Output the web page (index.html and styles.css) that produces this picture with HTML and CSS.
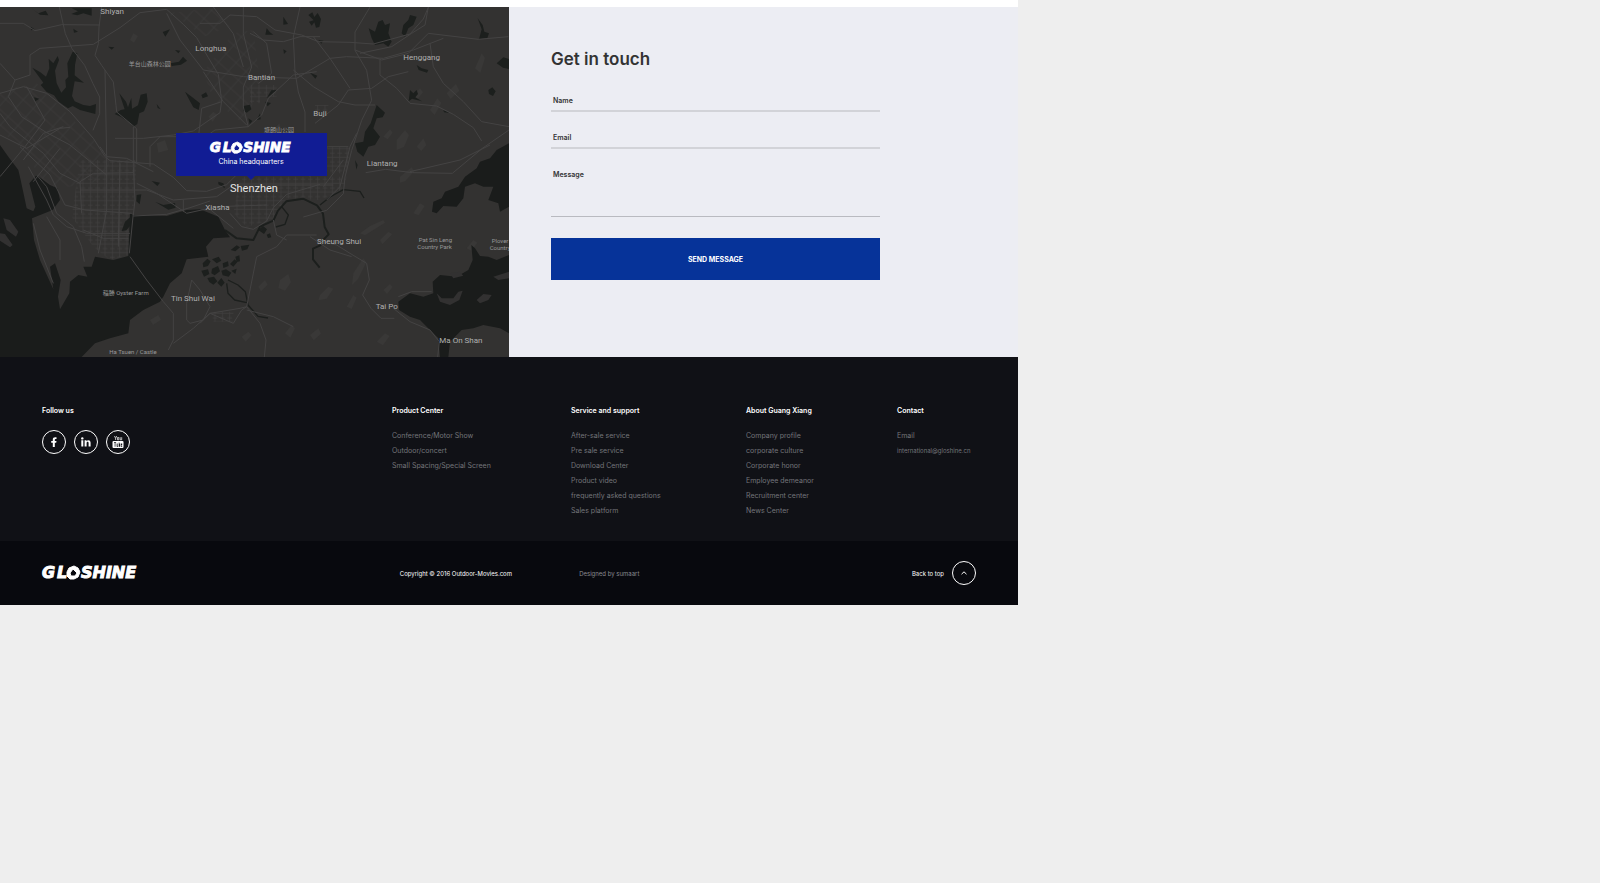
FILE: index.html
```html
<!DOCTYPE html>
<html lang="en">
<head>
    <meta charset="UTF-8">
    <meta name="viewport" content="width=device-width, initial-scale=1.0">
    <title>Gloshine - Contact</title>
    <link rel="stylesheet" href="styles.css">
</head>
<body>
<div class="page">
    <main class="contact">
        <div class="map">
            <svg class="map-art" viewBox="0 21 1527 1050" role="img" aria-label="Map of Shenzhen">
                <defs>
                    <pattern id="streets" width="22" height="26" patternUnits="userSpaceOnUse">
                        <path d="M0 4H22M7 0V26M0 18H14" fill="none" stroke="#403f3f" stroke-width="2"/>
                    </pattern>
                    <pattern id="diagonal" width="40" height="34" patternUnits="userSpaceOnUse" patternTransform="rotate(42)">
                        <path d="M0 6H40M12 0V34" fill="none" stroke="#3c3b3b" stroke-width="2"/>
                    </pattern>
                </defs>
                <rect y="21" width="1527" height="1050" fill="#333231"/>

                <!-- hills -->
                <g fill="#393837">
                    <path d="M840 840l25-18 8 25-18 25-20-8zM775 860l20-20 8 14-20 20zM960 885l25-25 15 6-20 30-25 5zM1060 820l30-45 9 12-25 50-18 18zM1240 640l20-30 14 8-18 28zM1140 720l25-25 12 8-30 30zM1200 530l35-28 8 12-28 30-15 4z"/>
                    <path d="M1190 420l25-30 12 16-15 35-22 9zM1290 330l22-35 12 14-20 36zM1340 280l28-28 10 20-26 25zM1425 205l20-45 10 14-14 45zM1240 285l20-20 9 12-18 22zM1250 440l20-25 9 20-15 18zM1150 410l20-22 8 10-15 20z"/>
                    <path d="M625 350l15-15 12 10-14 20zM820 390l18-20 6 18-15 12zM490 195l16-15 9 12-16 16zM390 120l10-20 14 8-12 20zM1040 920l20-35 10 8-15 34zM930 1005l25-20 8 16-22 20zM1130 1025l25-25 14 8-20 28zM1400 745l20-25 12 8-18 24zM470 430l25-10 10 30-30 8z"/>
                    <path d="M725 1010l20-15 10 10-18 20zM855 1000l20-25 10 10-14 28zM450 960l25-15 8 14-24 16zM1150 870l20-18 8 9-17 21zM1080 700l30-22 40-18 5 8-60 38z"/>
                </g>

                <!-- dense districts -->
                <path d="M0 270L110 250 330 470 320 540 150 570 60 440 0 390z" fill="url(#diagonal)"/>
                <path d="M240 480H410L400 640 385 765 330 780 280 740 215 650z" fill="url(#streets)"/>
                <path d="M720 530H1040L1030 570 960 600 860 595 820 660 740 680 700 640z" fill="url(#streets)"/>
                <path d="M700 100L760 90 780 250 735 375 640 300 610 215z" fill="url(#diagonal)"/>
                <path d="M500 40L640 25 690 80 610 110 560 70z" fill="url(#diagonal)"/>
                <path d="M750 255H830V290H780V310H750zM630 935H700V965H640zM945 315H985V335H945zM980 440H1050L1040 520H980z" fill="url(#streets)"/>

                <!-- sea -->
                <g fill="#1a1c1b">
                    <path d="M0 435L25 470 55 510 62 540 80 625 100 634 106 620 88 550 110 525 150 555 172 565 180 600 158 630 96 655 102 720 120 780 160 868 150 800 165 790 182 840 174 890 180 928 208 880 210 845 235 825 262 830 250 800 275 800 285 770 340 780 385 768 390 640 400 645 500 648 560 630 600 628 655 650 675 690 690 712 640 715 618 740 625 770 560 778 545 820 510 850 490 890 480 905 430 930 390 960 385 1000 330 1015 285 1030 245 1071H0z"/>
                    <path d="M1527 430L1490 450 1470 475 1440 485 1430 505 1395 530 1375 560 1335 575 1325 595 1300 605 1296 635 1310 640 1330 618 1370 620 1390 595 1395 560 1425 550 1450 560 1480 560 1465 600 1495 610 1500 635 1527 620z"/>
                    <path d="M1527 765L1490 780 1465 770 1440 768 1425 745 1414 735 1418 780 1405 810 1370 830 1320 825 1298 845 1300 880 1270 890 1230 880 1195 905 1197 930 1230 950 1260 960 1290 990 1315 1015 1320 1071H1345L1350 1025 1385 990 1420 985 1450 975 1500 985 1527 1000z"/>
                </g>
                <g fill="#323131">
                    <path d="M10 655L30 660 55 695 48 710 20 690zM0 700L15 702 38 735 30 742 0 722z"/>
                    <path d="M1310 880L1325 895 1360 895 1375 875 1388 872 1378 900 1350 915 1320 905zM1430 900L1450 882 1475 885 1465 900 1440 910zM1480 830L1527 815V835L1495 840zM1350 820l28-5 12 12-30 8z"/>
                </g>

                <!-- reservoirs and ponds -->
                <g fill="#1c1f1d">
                    <path d="M97 203L120 216 138 230 148 205 146 176 160 190 173 168 177 180 165 212 170 250 184 278 198 262 196 240 205 230 202 190 218 155 232 160 225 195 224 226 252 248 224 244 216 288 224 304 250 315 270 318 288 312 286 342 240 330 218 318 204 325 176 305 162 286 140 276 122 255 130 248z"/>
                    <path d="M358 280L378 305 384 322 394 294 396 326 414 316 422 284 440 280 443 305 432 334 418 340 412 372 400 380 390 368 362 350 344 342 362 330 374 328z"/>
                    <path d="M555 275L575 290 600 310 596 330 580 322 568 300zM512 190l25-5 12-15 12 12-18 12-28 4zM488 96l22-8-14 22zM325 140l18 2-8 7zM604 285l14-8 6 12-16 6zM525 150l16 2-6 8zM470 312l12 16-9-4z"/>
                    <path d="M95 25l20 15 22-8 8 14-25-2zM215 25h60v22l-25-7-18 6-18-4 20-8zM92 80l12 8-10 3zM220 86l14 9-12 3zM102 292l16 4-12 8z"/>
                    <path d="M1106 85L1125 95 1135 65 1148 60 1155 75 1170 70 1165 100 1175 125 1165 140 1150 130 1125 135 1115 115zM1205 100L1210 75 1225 60 1230 45 1250 50 1240 75 1225 85 1215 110zM1433 55l15 20 5 20 14 5-5 14-25 4 8-30zM925 45l12-8 6 14 10-12 10 18-5 24-10 2-5-16-8 10-8-12 14-4zM850 50l14 22-14 2zM800 85l10 12 10 7-24 0z"/>
                    <path d="M1130 315L1155 338 1148 352 1130 355 1120 385 1140 410 1125 435 1105 440 1090 470 1072 455 1065 430 1090 425 1095 395 1112 370zM1230 270l10 10 10-10 4 12-8 10 20 12-30-8-10 8zM1490 190l20-18 17 5v30l-18-4zM1465 270l12-8 10 12-8 14-12-6zM930 218l22 9-6 9zM1250 195l15 10 20 5-4 8-25-8zM1065 480l8 15-4 14zM1330 330l20 9-18-2z"/>
                    <path d="M730 318l20-4 4 14-14 10-10-6zM795 305l18 4-10 10zM850 148l10 6-8 8zM955 120l15 2-6 9zM830 270l-30 25 14-24zM745 355l12 8-8 10zM780 340l-10 20 12-2z"/>
                    <path d="M455 543l25 5-8 10zM465 605l25 10 35-6 2 14-22 6zM655 545l15 5 5 15-20-12zM375 665l20-18-4 30-12 14-14 2zM410 585l14-2-5 30-10-9z"/>
                    <path d="M608 790l14-14 10 8-8 14-14 4zM636 778l20-8 8 12-14 8zM668 790l16-6 2 14-16 6zM604 812l20-4 4 14-16 8zM636 806l18-8 6 16-16 12-10-6zM622 834l20-4 10 14-12 10-12-8zM664 812l14-4 16 10-8 12-18-4zM652 848l12-14 10 14-10 12z"/>
                    <path d="M692 750l18-14 10 6-14 12zM722 738l26-4-6 14-16 4zM690 792l14-14 8 8-12 14zM706 770l12-4 2 18-10 2zM694 812l16-6-4 16zM775 690l14-12 12 10-9 14zM800 704l10-4 4 12-10 2z"/>
                </g>
                <g fill="none" stroke="#1c1f1d" stroke-width="6" stroke-linejoin="round">
                    <path d="M675 690l35 25 50 5 20-40 40-18 14-30 25-28 50-8 42 20 18 25 5 40 12 22-15 15-10 18-22 10 0 32 20 25" />
                    <path d="M960 615l30-24 40-22 50 5 12 20M684 840l30 15 22 20 8 40 30 34 30 5M680 850l4 30 20 20 36 8M845 620l20 25-10 28-28 8" stroke-width="4"/>
                </g>

                <!-- roads -->
                <g class="roads">
                    <path d="M178 21l18 80 20 45 38 50 25 55 20 40 0 50-20 50M305 21l-8 60-2 50-10 35 20 30 35 50 8 70 2 20 60 50 0 100"/>
                    <path d="M0 70h70l35 22 80-18 115 1M0 190l45 50 45-15 0-60 30-20 160-12 80-50 60-45 80-10 50 45 40 40 35 60 30 50 10 80-5 35-80 55-60 12-90 10-85 0"/>
                    <path d="M0 280l70-20 70 20 70 55 70 80 35 55 15 12 130 10 60 40 40 40 60 2 60-20 40-40 80-70"/>
                    <path d="M45 240l-20 50 40 60 70 45 75 40 110 90M0 340l30 40 100 80 50 60 60 30M80 260l55 100-60 80-75 90M0 405l80 40 100-60 30-3"/>
                    <path d="M70 480l60-80 60-20M100 545l80-100M60 440l90 85 45 90 60 15 140 10M85 500l55 100 20 45 40 35 60 20 130 0"/>
                    <path d="M110 525l30 35 30 80 50 40 25 60 8 45M140 650l40 70 0 60M245 640l-5-95 40-25 120-2M300 440l20 30 0 160-25 130M315 210l5 260 60 5 80 40M360 490l-5 250M400 380v120l5 100-5 45"/>
                    <path d="M100 670l20 80 40 100M240 570l200 0 80 30 130-10 50-35 300 0M250 690l60 25 75 0M410 550l60 30 90 60 90-20 150-5"/>
                    <path d="M500 40l40 80 70 90 120 20 160 5 100-60 50-5 110 5 90-25 90-35"/>
                    <path d="M600 70l60 0 30-25 80 5 55 40 80 15 50 20 95 2 70 5 110-30 40-45 15-35M730 21l0 80 25 100-25 60 0 60 15 60"/>
                    <path d="M750 100l40 20 60 5 50-15 60 0M610 215l60 90 40 40 30 30M560 500l15-60 70-50 100-10 40-35 20-50 75-70 70-10"/>
                    <path d="M760 95l40 35 15 90-40 30M900 21l-20 90 5 105 10 60 20 60 0 60"/>
                    <path d="M880 210l60 50 75 45 50 10 60 0M945 370l70-55 30-45 70-5 50-35 60-15M940 110l50 65 60 90M1110 21l-45 75 0 55 35 60 15 90-30 60-30 90-20 80-5 50-50 50-70 20"/>
                    <path d="M1140 180l0 45 50 40 40 45 80 8 50 25 60 40 25 40M1065 150l80 30 80-20 60-60 150 18 90-8M1290 130l10 70 30 50 60 55 55 60 82 15"/>
                    <path d="M1527 390l-80 55-90 75-120-2-80-10-60 10M1230 515l150-35 90-45M1080 160l95-20 60-40 40-25 10-54"/>
                    <path d="M390 770l50 70 50 65 30 35 0 80-15 30M400 640l-12 120M520 1030l60-45 50-45 90-15 20-5 30-150 60-30 30-35 90 0"/>
                    <path d="M820 660l10 45 30 15M740 920l40 50 18 50-5 51M740 930l80 20 60 30M600 970l30-30 70 30 25-40 15-10M560 960l0-50 15-70 25 30 30 50-20 40-40 10z"/>
                    <path d="M950 720l60 15 40 25 50 30 8 50-20 45 25 40 30 30 40 0M1180 925l50 40 60 25 28 35-5 46M1195 890l40-15 60 0M930 710l60 40 65 20"/>
                    <path d="M400 648l100-5 70-20 60-20M690 640l35 40 35 8 40-25 20-40 40-40 100-30M550 600v35M620 620l80 65"/>
                    <path d="M980 600l40-40 30-120 20-40M985 440h60M970 560l60-80M930 530l20-80 35-10M450 500l0-60 30-30 110 0M640 21l60 80 30 100M665 305l-60 20-10 90"/>
                </g>

                <g class="places">
                    <text x="301" y="42">Shiyan</text>
                    <text x="586" y="154">Longhua</text>
                    <text x="744" y="240">Bantian</text>
                    <text x="1210" y="180">Henggang</text>
                    <text x="940" y="348">Buji</text>
                    <text x="1100" y="498">Liantang</text>
                    <text x="616" y="630">Xiasha</text>
                    <text x="951" y="733">Sheung Shui</text>
                    <text x="513" y="903">Tin Shui Wai</text>
                    <text x="1127" y="926">Tai Po</text>
                    <text x="1318" y="1029">Ma On Shan</text>
                </g>
                <g class="parks">
                    <text x="386" y="197">羊台山森林公园</text>
                    <text x="792" y="396">塘朗山公园</text>
                    <text x="308" y="884">稲勝 Oyster Farm</text>
                    <text x="1256" y="726">Pat Sin Leng</text>
                    <text x="1252" y="747">Country Park</text>
                    <text x="1475" y="729">Plover</text>
                    <text x="1469" y="750">Country</text>
                    <text x="328" y="1062">Ha Tsuen / Castle</text>
                </g>
                <text class="city" x="690" y="576">Shenzhen</text>
            </svg>

            <div class="callout">
                <svg class="logo logo-small" viewBox="0 0 96 14" role="img" aria-label="Gloshine">
                    <text x="0" y="12">G</text>
                    <text x="15" y="12">L</text>
                    <path fill-rule="evenodd" d="M32 0L36 2L38 6L36 11L32 13H28L25 10V6L27 2zM31 3L28 7L29 10H33L35 7z"/>
                    <text x="39" y="12">SHINE</text>
                </svg>
                <span class="callout-text">China headquarters</span>
            </div>
        </div>

        <form class="touch">
            <h2 class="touch-title">Get in touch</h2>
            <div class="field">
                <label for="name">Name</label>
                <input type="text" id="name">
            </div>
            <div class="field">
                <label for="email">Email</label>
                <input type="email" id="email">
            </div>
            <div class="field field-message">
                <label for="message">Message</label>
                <textarea id="message"></textarea>
            </div>
            <button type="button" class="send">SEND MESSAGE</button>
        </form>
    </main>

    <footer>
        <div class="footer-links">
            <div class="column">
                <h3>Follow us</h3>
                <div class="social">
                    <a href="#" class="circle" aria-label="Facebook">
                        <svg viewBox="0 0 12 12"><path d="M4.8 11V6.7H3.2V4.9H4.8V3.6C4.8 2 5.7 1.2 7.2 1.2H8.5V3H7.6C7 3 6.8 3.3 6.8 3.8V4.9H8.5L8.2 6.7H6.8V11z"/></svg>
                    </a>
                    <a href="#" class="circle" aria-label="LinkedIn">
                        <svg viewBox="0 0 12 12"><circle cx="2.3" cy="2.4" r="1.2"/><path d="M1.3 4.3H3.3V10.4H1.3zM4.6 4.3H6.5V5.2C7.6 3.5 10.6 3.8 10.6 6.7V10.4H8.6V7.2C8.6 5.3 6.6 5.4 6.6 7.2V10.4H4.6z"/></svg>
                    </a>
                    <a href="#" class="circle" aria-label="YouTube">
                        <svg class="youtube" viewBox="0 0 12 14"><path d="M2.5 1L3.6 3.4V5M4.7 1L3.6 3.4M5.5 2.5H6.8V4.8H5.5zM8.2 2.2V4.8H9.7V2.2" fill="none" stroke="#fff" stroke-width="0.7"/><path fill-rule="evenodd" d="M1.5 6H10.5Q11.5 6 11.5 7V12Q11.5 13 10.5 13H1.5Q0.5 13 0.5 12V7Q0.5 6 1.5 6zM2 7.3V8.1H2.7V11.7H3.4V8.1H4.1V7.3zM4.7 8.5V11.7H6.1V8.5H5.6V11H5.2V8.5zM6.8 7.3V11.7H8.1V8.5H7.3V7.3zM8.8 8.5V11.7H10.2V11H9.4V10.3H10.2V8.5z"/></svg>
                    </a>
                </div>
            </div>
            <div class="column">
                <h3>Product Center</h3>
                <ul>
                    <li><a href="#">Conference/Motor Show</a></li>
                    <li><a href="#">Outdoor/concert</a></li>
                    <li><a href="#">Small Spacing/Special Screen</a></li>
                </ul>
            </div>
            <div class="column">
                <h3>Service and support</h3>
                <ul>
                    <li><a href="#">After-sale service</a></li>
                    <li><a href="#">Pre sale service</a></li>
                    <li><a href="#">Download Center</a></li>
                    <li><a href="#">Product video</a></li>
                    <li><a href="#">frequently asked questions</a></li>
                    <li><a href="#">Sales platform</a></li>
                </ul>
            </div>
            <div class="column">
                <h3>About Guang Xiang</h3>
                <ul>
                    <li><a href="#">Company profile</a></li>
                    <li><a href="#">corporate culture</a></li>
                    <li><a href="#">Corporate honor</a></li>
                    <li><a href="#">Employee demeanor</a></li>
                    <li><a href="#">Recruitment center</a></li>
                    <li><a href="#">News Center</a></li>
                </ul>
            </div>
            <div class="column">
                <h3>Contact</h3>
                <ul>
                    <li>Email</li>
                    <li><a class="mail" href="mailto:international@gloshine.cn">international@gloshine.cn</a></li>
                </ul>
            </div>
        </div>

        <div class="footer-bar">
            <svg class="logo" viewBox="0 0 96 14" role="img" aria-label="Gloshine">
                <text x="0" y="12">G</text>
                <text x="15" y="12">L</text>
                <path fill-rule="evenodd" d="M32 0L36 2L38 6L36 11L32 13H28L25 10V6L27 2zM31 3L28 7L29 10H33L35 7z"/>
                <text x="39" y="12">SHINE</text>
            </svg>
            <span class="copyright">Copyright © 2016 Outdoor-Movies.com</span>
            <span class="designed">Designed by sumaart</span>
            <a href="#" class="top-link">
                Back to top
                <span class="circle">
                    <svg viewBox="0 0 12 12"><path d="M3.5 7.2L6 4.8L8.5 7.2" fill="none" stroke="#fff" stroke-width="1"/></svg>
                </span>
            </a>
        </div>
    </footer>
</div>
</body>
</html>
```
FILE: styles.css
```css
* {
    box-sizing: border-box;
}
body {
    margin: 0;
    background-color: #eeeeee;
    font-family: Inter, "Liberation Sans", sans-serif;
    font-size: 7px;
    line-height: 15px;
    color: #333;
}
a {
    color: inherit;
    text-decoration: none;
}
.page {
    max-width: 1018px;
    padding-top: 7px;
    background: white;
}

/* contact */
.contact {
    display: grid;
    grid-template-columns: 1fr 1fr;
    background: #ecedf3;
}
.map {
    position: relative;
}
.map-art {
    display: block;
    width: 100%;
}
.roads {
    fill: none;
    stroke: #444343;
    stroke-width: 3px;
    stroke-linejoin: round;
}
.places, .parks, .city {
    font-family: Roboto, "Noto Sans CJK SC", sans-serif;
    font-size: 24px;
    fill: #b0b0b0;
}
.parks {
    font-size: 18px;
    fill: #999;
}
.city {
    font-size: 33px;
    fill: #e4e4e4;
}
.callout {
    position: absolute;
    top: 36%;
    left: 50%;
    width: 151px;
    height: 43px;
    margin-left: -79px;
    padding-top: 9px;
    display: flex;
    flex-direction: column;
    align-items: center;
    background: #111c94;
    color: white;
}
.callout::after {
    content: "";
    position: absolute;
    top: 100%;
    border: 4px solid transparent;
    border-top-color: #111c94;
}
.logo {
    display: block;
    width: 96px;
    height: 14px;
    overflow: visible;
    fill: white;
    stroke: white;
    stroke-width: 1px;
    font-family: "DejaVu Sans", sans-serif;
    font-size: 16px;
    font-weight: bold;
    font-style: italic;
}
.logo-small {
    width: 84px;
    height: 12px;
}

/* form */
.touch {
    padding: 41px 138px 0 42px;
}
.touch-title {
    margin: 0 0 31px;
    font-size: 17px;
    line-height: 22px;
    font-weight: 600;
}
.field {
    display: flex;
    gap: 8px;
    height: 11px;
    margin-bottom: 26px;
    padding-left: 2px;
    line-height: 0;
    font-weight: 600;
    border-bottom: 2px solid #d2d3d8;
}
.field input, .field textarea {
    flex: 1;
    min-width: 0;
    padding: 0;
    border: 0;
    outline: 0;
    resize: none;
    background: none;
    font: inherit;
}
.field-message {
    height: 42px;
    margin-bottom: 21px;
    border-bottom: 1px solid #b9bac0;
}
.send {
    width: 100%;
    height: 42px;
    padding: 0;
    border: 0;
    background: #063399;
    color: white;
    font: 700 7px/15px Inter, "Liberation Sans", sans-serif;
    cursor: pointer;
}

/* footer */
footer {
    background: #101116;
    color: white;
}
.footer-links {
    display: grid;
    grid-template-columns: 350fr 179fr 175fr 151fr 79fr;
    padding: 46px 42px 23px;
}
.column {
    white-space: nowrap;
}
.column h3 {
    margin: 0 0 10px;
    font-size: 7px;
    font-weight: 600;
}
.column ul {
    margin: 0;
    padding: 0;
    list-style: none;
    color: #74757a;
}
.column .mail {
    font-size: 6px;
}
.social {
    display: flex;
    gap: 8px;
    padding-top: 2px;
}
.circle {
    display: flex;
    align-items: center;
    justify-content: center;
    width: 24px;
    height: 24px;
    border: 1px solid white;
    border-radius: 50%;
}
.circle svg {
    width: 12px;
    height: 12px;
    fill: white;
}
.circle .youtube {
    height: 14px;
}
.footer-bar {
    display: grid;
    grid-template-columns: 357fr 179fr 332fr auto;
    align-items: center;
    padding: 20px 42px;
    background: #08090e;
    font-size: 6px;
}
.designed {
    color: #8a8b90;
}
.top-link {
    display: flex;
    align-items: center;
    gap: 8px;
}
```
